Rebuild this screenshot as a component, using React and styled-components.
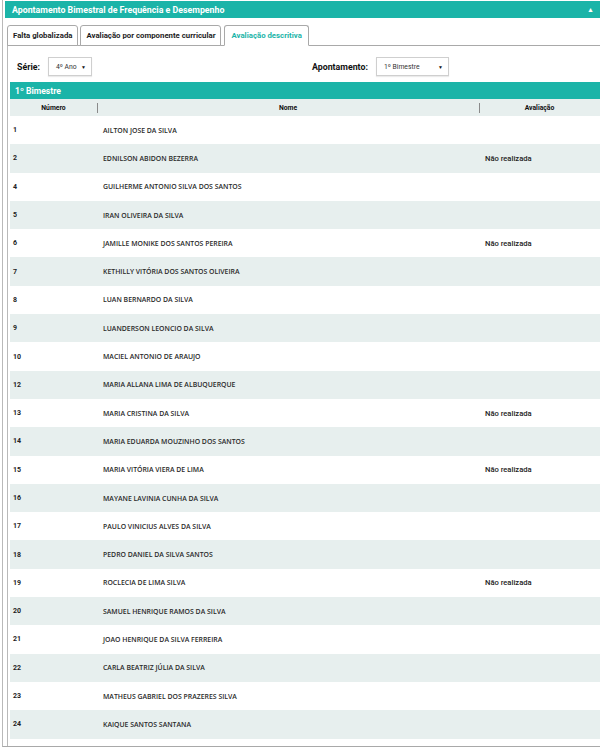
import styled, { createGlobalStyle } from "styled-components";

const teal = "#1bb4a8";
const stripe = "#e7efee";

const GlobalStyle = createGlobalStyle`
  html, body {
    margin: 0;
    padding: 0;
    background: #fff;
    overflow: hidden;
  }
  body {
    font-family: Roboto, "Noto Sans", sans-serif;
    color: #1d1d1d;
  }
`;

const alunos = [
  ["1", "AILTON JOSE DA SILVA", ""],
  ["2", "EDNILSON ABIDON BEZERRA", "Não realizada"],
  ["4", "GUILHERME ANTONIO SILVA DOS SANTOS", ""],
  ["5", "IRAN OLIVEIRA DA SILVA", ""],
  ["6", "JAMILLE MONIKE DOS SANTOS PEREIRA", "Não realizada"],
  ["7", "KETHILLY VITÓRIA DOS SANTOS OLIVEIRA", ""],
  ["8", "LUAN BERNARDO DA SILVA", ""],
  ["9", "LUANDERSON LEONCIO DA SILVA", ""],
  ["10", "MACIEL ANTONIO DE ARAUJO", ""],
  ["12", "MARIA ALLANA LIMA DE ALBUQUERQUE", ""],
  ["13", "MARIA CRISTINA DA SILVA", "Não realizada"],
  ["14", "MARIA EDUARDA MOUZINHO DOS SANTOS", ""],
  ["15", "MARIA VITÓRIA VIERA DE LIMA", "Não realizada"],
  ["16", "MAYANE LAVINIA CUNHA DA SILVA", ""],
  ["17", "PAULO VINICIUS ALVES DA SILVA", ""],
  ["18", "PEDRO DANIEL DA SILVA SANTOS", ""],
  ["19", "ROCLECIA DE LIMA SILVA", "Não realizada"],
  ["20", "SAMUEL HENRIQUE RAMOS DA SILVA", ""],
  ["21", "JOAO HENRIQUE DA SILVA FERREIRA", ""],
  ["22", "CARLA BEATRIZ JÚLIA DA SILVA", ""],
  ["23", "MATHEUS GABRIEL DOS PRAZERES SILVA", ""],
  ["24", "KAIQUE SANTOS SANTANA", ""],
];

export default function App() {
  return (
    <>
      <GlobalStyle />
      <Panel>
        <PanelHeader>
          <span>Apontamento Bimestral de Frequência e Desempenho</span>
          <Caret>▲</Caret>
        </PanelHeader>

        <TabArea>
          <TabList>
            <Tab>Falta globalizada</Tab>
            <Tab>Avaliação por componente curricular</Tab>
            <Tab $active>Avaliação descritiva</Tab>
          </TabList>

          <TabBody>
            <Filters>
              <Field>
                <Label>Série:</Label>
                <Select $w={44}>
                  <span>4º Ano</span>
                  <Arrow>▼</Arrow>
                </Select>
              </Field>
              <Field>
                <Label>Apontamento:</Label>
                <Select $w={73}>
                  <span>1º Bimestre</span>
                  <Arrow>▼</Arrow>
                </Select>
              </Field>
            </Filters>

            <SectionBar>1º Bimestre</SectionBar>
            <Table>
              <thead>
                <tr>
                  <Th $w={87}>Número</Th>
                  <Th $sep>Nome</Th>
                  <Th $sep $w={121}>Avaliação</Th>
                </tr>
              </thead>
              <tbody>
                {alunos.map(([num, nome, aval], i) => (
                  <Row key={num} $odd={i % 2 === 1}>
                    <NumCell>{num}</NumCell>
                    <NameCell>{nome}</NameCell>
                    <EvalCell>{aval}</EvalCell>
                  </Row>
                ))}
              </tbody>
            </Table>
          </TabBody>
        </TabArea>
      </Panel>
    </>
  );
}

const Panel = styled.div`
  margin-left: 2px;
  border-left: 1px solid #b9b9b9;
  border-bottom: 1px solid #a9a9a9;
  padding: 1px 0 0 2px;
  display: flex;
  flex-direction: column;
`;

const PanelHeader = styled.div`
  flex-shrink: 0;
  height: 17px;
  background: ${teal};
  color: #fff;
  font-size: 8.8px;
  font-weight: 700;
  display: flex;
  align-items: center;
  justify-content: space-between;
  padding: 0 6px 0 7px;
`;

const Caret = styled.span`
  font-size: 7px;
`;

const TabArea = styled.div`
  margin: 7px 0 0 2px;
  display: flex;
  flex-direction: column;
`;

const TabList = styled.div`
  display: flex;
  gap: 2px;
  position: relative;
  z-index: 1;
  margin-bottom: -1px;
`;

const Tab = styled.div`
  height: 21px;
  box-sizing: border-box;
  display: flex;
  align-items: center;
  border: 1px solid #a9a9a9;
  border-bottom: ${(p) => (p.$active ? "1px solid #fff" : "1px solid #a9a9a9")};
  border-radius: 3px 3px 0 0;
  background: #fff;
  font-size: 7.8px;
  font-weight: 700;
  color: ${(p) => (p.$active ? teal : "#1d1d1d")};
  margin-left: ${(p) => (p.$active ? "1px" : "0")};
  padding: ${(p) => (p.$active ? "0 6px" : "0 5px")};
`;

const TabBody = styled.div`
  border-top: 1px solid #a9a9a9;
  border-left: 1px solid #b9b9b9;
  padding: 11px 0 7px 2px;
`;

const Filters = styled.div`
  display: grid;
  grid-template-columns: 295px 1fr;
  height: 25px;
  align-items: start;
`;

const Field = styled.div`
  display: flex;
  align-items: center;
  gap: 8px;
  padding-left: 7px;
`;

const Label = styled.label`
  font-size: 8.8px;
  font-weight: 700;
  color: #111;
`;

const Select = styled.div`
  width: ${(p) => p.$w}px;
  height: 19px;
  box-sizing: border-box;
  border: 1px solid #cfcfcf;
  box-shadow: 0 1px 1px rgba(0, 0, 0, 0.08);
  display: flex;
  align-items: center;
  justify-content: space-between;
  padding: 0 5px 0 7px;
  font-size: 6.8px;
  color: #333;
`;

const Arrow = styled.span`
  font-size: 5px;
  color: #111;
`;

const SectionBar = styled.div`
  height: 17px;
  background: ${teal};
  color: #fff;
  font-size: 8.6px;
  font-weight: 700;
  display: flex;
  align-items: center;
  padding-left: 5px;
`;

const Table = styled.table`
  width: 100%;
  border-collapse: collapse;
  table-layout: fixed;
`;

const Th = styled.th`
  width: ${(p) => (p.$w ? `${p.$w}px` : "auto")};
  height: 17px;
  padding: 0;
  background: ${stripe};
  font-size: 6.8px;
  font-weight: 700;
  color: #111;
  text-align: center;
  position: relative;
  &::before {
    content: "";
    display: ${(p) => (p.$sep ? "block" : "none")};
    position: absolute;
    left: 0;
    top: 4px;
    height: 10px;
    border-left: 1px solid #8a8a8a;
  }
`;

const Row = styled.tr`
  height: 28.3px;
  background: ${(p) => (p.$odd ? stripe : "#fff")};
`;

const NumCell = styled.td`
  padding: 0 0 0 3px;
  font-size: 7px;
  font-weight: 700;
  color: #222;
`;

const NameCell = styled.td`
  padding: 0 0 0 6px;
  font-family: "Open Sans", "Noto Sans", sans-serif;
  font-size: 6.9px;
  font-weight: 600;
  color: #2a2a2a;
`;

const EvalCell = styled.td`
  padding: 0 0 0 6px;
  font-size: 7.6px;
  font-weight: 500;
  color: #222;
`;
